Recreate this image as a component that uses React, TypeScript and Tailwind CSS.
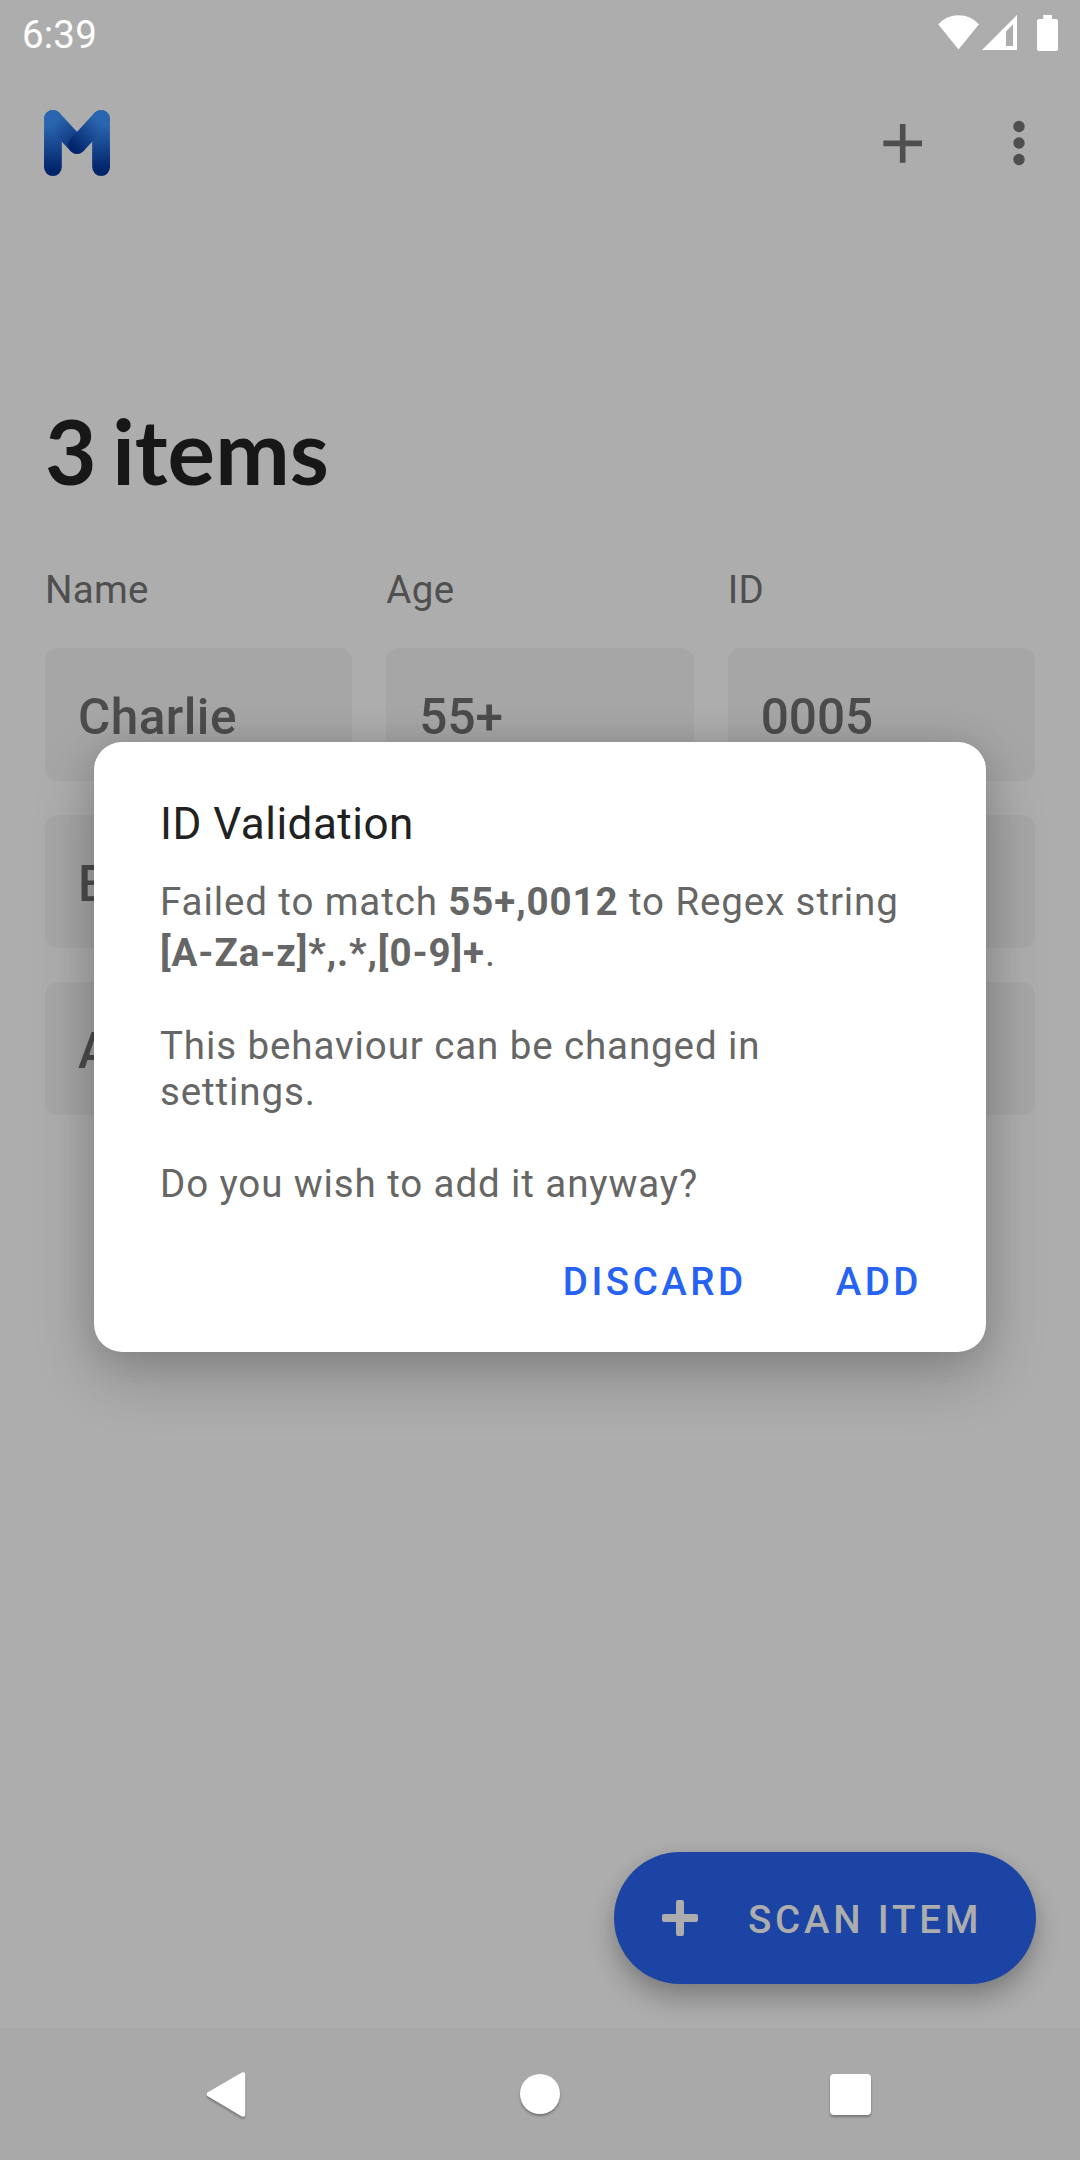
import React from "react";

const columns = ["Name", "Age", "ID"];
const rows = [
  ["Charlie", "55+", "0005"],
  ["Bob", "", ""],
  ["Alice", "", ""],
];

function StatusIcons() {
  return (
    <svg width="124" height="40" viewBox="936 13 124 40" fill="#fff">
      <path d="M958.5 49.4 938.2 24.2Q946.5 15.2 958.5 15.2T979 24.2Z" />
      <path fillRule="evenodd" d="M982 50 1017 15V50ZM1006 31.5V46H1013V24.2Z" />
      <path d="M1043.3 15h8.7v4h4a2 2 0 0 1 2 2v28a2 2 0 0 1-2 2h-17a2 2 0 0 1-2-2V21a2 2 0 0 1 2-2h4.3z" />
    </svg>
  );
}

function Logo() {
  return (
    <svg width="66" height="66" viewBox="0 0 66 66" fill="none" strokeLinecap="round" strokeWidth="17.8">
      <defs>
        <linearGradient id="leg" gradientUnits="userSpaceOnUse" x1="0" y1="14" x2="0" y2="60">
          <stop offset="0" stopColor="#2a66b0" />
          <stop offset="1" stopColor="#01246a" />
        </linearGradient>
        <linearGradient id="armL" gradientUnits="userSpaceOnUse" x1="11" y1="11" x2="38" y2="40">
          <stop offset="0" stopColor="#2a66b0" />
          <stop offset="1" stopColor="#01246a" />
        </linearGradient>
        <linearGradient id="armR" gradientUnits="userSpaceOnUse" x1="55" y1="11" x2="29" y2="38">
          <stop offset="0" stopColor="#2a66b0" />
          <stop offset="1" stopColor="#01246a" />
        </linearGradient>
      </defs>
      <path d="M9 8.9 8.9 57.1" stroke="url(#leg)" />
      <path d="M57 8.9 57.1 57.1" stroke="url(#leg)" />
      <path d="M8.9 8.9 33 35" stroke="url(#armL)" />
      <path d="M57.1 8.9 33 35" stroke="url(#armR)" />
    </svg>
  );
}

function ValidationDialog() {
  return (
    <div className="absolute inset-x-[94px] top-[742px] flex h-[610px] flex-col rounded-[28px] bg-white px-[66px] pt-[56px] shadow-[0_24px_60px_rgba(0,0,0,0.22),0_0_36px_rgba(0,0,0,0.1)]">
      <h2 className="text-[44px] leading-[52px] tracking-[0.5px] text-[#212121]">ID Validation</h2>
      <div className="mt-[26px] text-[38.5px] leading-[46px] tracking-[0.9px] text-[#666]">
        <p className="whitespace-nowrap leading-[51px]">
          Failed to match <b>55+,0012</b> to Regex string
          <br />
          <b>[A-Za-z]*,.*,[0-9]+</b>.
        </p>
        <p className="mt-[45px]">
          This behaviour can be changed in
          <br />
          settings.
        </p>
        <p className="mt-[46px]">Do you wish to add it anyway?</p>
      </div>
      <div className="mt-[52px] flex justify-end gap-[89px] text-[38.5px] font-medium leading-[46px] tracking-[3.5px] text-[#2663f5]">
        <button>DISCARD</button>
        <button className="-mr-[2px]">ADD</button>
      </div>
    </div>
  );
}

export default function App() {
  return (
    <div className="relative flex h-[2160px] w-[1080px] flex-col overflow-hidden bg-[#adadad] font-['Roboto',sans-serif] text-[#4f4f4f]">
      <div className="flex h-[66px] items-start justify-between pl-[22px] pr-[20px] pt-[13px] text-white">
        <span className="text-[38.5px] leading-[44px] tracking-[0.2px]">6:39</span>
        <StatusIcons />
      </div>
      <header className="flex h-[154px] items-center pl-[44px] pr-[55px]">
        <Logo />
        <svg className="ml-auto" width="39" height="39" viewBox="0 0 39 39" fill="#4f4f4f">
          <path d="M16.9 0h5.6v16.6h16.5v5.6H22.5v16.6h-5.6V22.2H.4v-5.6h16.5z" />
        </svg>
        <svg className="ml-[91px]" width="12" height="46" viewBox="0 0 12 46" fill="#4f4f4f">
          <circle cx="6" cy="6.5" r="5.7" />
          <circle cx="6" cy="23" r="5.7" />
          <circle cx="6" cy="39.5" r="5.7" />
        </svg>
      </header>
      <main className="flex-1 px-[45px] pt-[178px]">
        <h1 className="font-['Lato',sans-serif] text-[89px] font-bold leading-[106px] text-[#171717] [word-spacing:-6px]">
          3 items
        </h1>
        <div className="mt-[63px] grid grid-cols-3 gap-x-[34px] text-[38.5px] leading-[46px] tracking-[0.3px]">
          {columns.map((c) => (
            <span key={c}>{c}</span>
          ))}
        </div>
        <div className="mt-[35px] grid grid-cols-3 gap-[34px]">
          {rows.flat().map((v, i) => (
            <div
              key={i}
              className={
                "flex h-[133px] items-center rounded-[13px] bg-[#a6a6a6] px-[33px] pt-[4px] text-[49.5px] font-medium leading-[58px] text-[#4c4c4c]" +
                (i % 3 === 0 ? " tracking-[0.45px]" : "")
              }
            >
              {v}
            </div>
          ))}
        </div>
      </main>
      <button className="mb-[44px] mr-[44px] flex h-[132px] w-[422px] shrink-0 items-center self-end rounded-full bg-[#1b44a5] pl-[48px] text-[38.5px] font-medium tracking-[3.8px] text-[#adadad] shadow-[0_15px_26px_rgba(0,0,0,0.25),0_0_14px_rgba(0,0,0,0.05)]">
        <svg width="36" height="36" viewBox="0 0 36 36" fill="currentColor">
          <rect x="14" width="8" height="36" rx="2" />
          <rect y="14" width="36" height="8" rx="2" />
        </svg>
        <span className="ml-[50px] pt-[4px] leading-[46px]">SCAN ITEM</span>
      </button>
      <nav className="relative h-[132px] shrink-0 bg-[#a9a9a9]">
        <svg
          className="drop-shadow-[0_2px_1px_rgba(0,0,0,0.3)]"
          width="1080"
          height="132"
          viewBox="0 2028 1080 132"
          fill="#fff"
        >
          <path d="M209 2094.3 243 2074.5V2114.5Z" stroke="#fff" strokeWidth="4.5" strokeLinejoin="round" />
          <circle cx="540" cy="2094" r="20" />
          <rect x="830" y="2074" width="41" height="41" rx="4" />
        </svg>
      </nav>
      <ValidationDialog />
    </div>
  );
}
